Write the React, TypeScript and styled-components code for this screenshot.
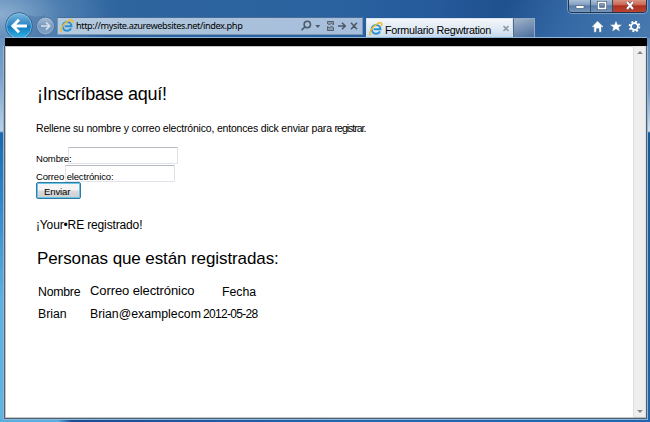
import React from 'react';
import styled, { createGlobalStyle } from 'styled-components';

const GlobalStyle = createGlobalStyle`
  * { box-sizing: border-box; }
  body { margin: 0; overflow: hidden; font-family: "Liberation Sans", Arial, sans-serif; color: #000; }
`;

const Window = styled.div`
  width: 650px;
  height: 422px;
  display: flex;
  flex-direction: column;
  overflow: hidden;
  background:
    linear-gradient(90deg, #58aedd 0, #58aedd 58px, #1b4c94 72px, #2466ae 350px, #2065b0 100%) 0 419px / 650px 3px no-repeat,
    linear-gradient(180deg, #6b94c0 0, #7ba0c8 37px, #b9d0e5 93px, #1c68ab 95px, #2c83c3 152px, #5cb2e0 262px, #62b4e0 384px) 0 38px / 6px 384px no-repeat,
    linear-gradient(180deg, #5f8dbe 0, #7199c4 50px, #d3e0ed 93px, #155b9b 95px, #1d65ad 384px) 644px 38px / 6px 384px no-repeat,
    #2866a3;
`;

const TitleArea = styled.header`
  position: relative;
  height: 38px;
  flex: none;
  display: flex;
  align-items: flex-end;
  background:
    radial-gradient(ellipse 110px 55px at 0 14px, rgba(142, 176, 209, 0.95), rgba(96, 140, 185, 0.5) 55%, transparent),
    linear-gradient(115deg, transparent 66%, rgba(22, 66, 122, 0.4) 76%, rgba(75, 125, 180, 0.35) 86%, rgba(100, 145, 190, 0.5) 100%),
    linear-gradient(90deg, #4d7fb2 0, #2e659f 120px, #2a629f 330px, #25599a 450px, #2a619f 100%);
`;

const NavButtons = styled.div`
  width: 57px;
  height: 38px;
  flex: none;
  svg { display: block; }
`;

const AddressBar = styled.div`
  width: 306px;
  height: 18px;
  margin-bottom: 3px;
  flex: none;
  display: flex;
  align-items: center;
  padding: 0 3px 0 2px;
  border: 1px solid #7996b6;
  border-top-color: #486d98;
  background: linear-gradient(90deg, #b5cbe0, #a9c1da 55%, #a7bfdc);
`;

const Url = styled.span`
  font: 9.2px/16px "Noto Sans", sans-serif;
  letter-spacing: -0.4px;
  margin-left: 2px;
  flex: 1;
  white-space: nowrap;
`;

const ActiveTab = styled.div`
  width: 147px;
  height: 20px;
  margin-left: 3px;
  display: flex;
  align-items: center;
  padding: 0 3px 0 2px;
  background: linear-gradient(180deg, #f3f6fa, #dce7f3 60%, #c0d5ea);
  border: 1px solid #d7e3ef;
  border-bottom: 0;
`;

const TabTitle = styled.span`
  flex: 1;
  margin: 3px 0 0 2px;
  font-size: 10.8px;
  line-height: 14px;
  letter-spacing: -0.28px;
  white-space: nowrap;
`;

const NewTab = styled.div`
  width: 22px;
  height: 20px;
  border: 1px solid #94a9c2;
  border-left-color: #50698a;
  background: linear-gradient(160deg, #a0b2c8, #7590b3 50%, #486e9e);
`;

const Commands = styled.div`
  display: flex;
  gap: 3px;
  margin: 0 8px 4px auto;
`;

const Caption = styled.div`
  position: absolute;
  top: -1px;
  right: 3px;
  height: 14px;
  display: flex;
  border: 1px solid #22354d;
  border-radius: 0 0 4px 4px;
  overflow: hidden;
  box-shadow: 0 0 0 1px rgba(170, 197, 224, 0.55);
`;

const CaptionButton = styled.button<{ $close?: boolean }>`
  width: ${p => (p.$close ? 33 : 22)}px;
  height: 12px;
  padding: 0;
  border: 0;
  border-right: ${p => (p.$close ? 0 : 1)}px solid #344c6b;
  display: flex;
  justify-content: center;
  background: ${p =>
    p.$close
      ? 'linear-gradient(180deg, #d89583, #cb6350 42%, #ac2f20 48%, #bb4430)'
      : 'linear-gradient(180deg, #a9bfd7, #819fc1 42%, #587ca8 48%, #7396bd)'};
`;

const BlackBar = styled.div`
  height: 9px;
  margin: -1px 3px 0 5px;
  flex: none;
  background: #000;
  border-top: 1px solid #8db9df;
  position: relative;
`;

const Frame = styled.div`
  flex: 1;
  margin: 0 3px 3px 4px;
  display: flex;
  border: 1px solid #4d6173;
  border-top: 0;
  box-shadow: 0 0 0 1px #8cb8dd;
  clip-path: inset(0 -1px -1px -1px);
  background: #fff;
`;

const Page = styled.main`
  flex: 1;
  border: solid #c6c6c6;
  border-width: 1px 0 1px 1px;
  padding: 37px 0 0 30px;
`;

const ScrollBar = styled.div`
  width: 13px;
  background: #eeeeef;
  border: 1px solid #dedede;
  border-bottom-color: #b9b9b9;
  display: flex;
  flex-direction: column;
  align-items: center;
  justify-content: space-between;
  padding: 4px 0;
`;

const Arrow = styled.i<{ $down?: boolean }>`
  border: 3px solid transparent;
  border-width: ${p => (p.$down ? '3px 3px 0' : '0 3px 3px')};
  border-${p => (p.$down ? 'top' : 'bottom')}-color: #888;
`;

const Text = styled.div<{ $size: number; $line: number; $track?: number; $top?: number; $left?: number }>`
  font-size: ${p => p.$size}px;
  line-height: ${p => p.$line}px;
  letter-spacing: ${p => p.$track || 0}px;
  margin: ${p => p.$top || 0}px 0 0 ${p => p.$left || 0}px;
  white-space: nowrap;
`;

const Registrar = styled.span`
  letter-spacing: -1px;
`;

const Form = styled.form`
  margin-top: 12px;
`;

const Field = styled.label`
  display: flex;
  height: 18px;
`;

const FieldLabel = styled.span<{ $width: number; $track: number }>`
  width: ${p => p.$width}px;
  font-size: 9.5px;
  line-height: 12px;
  letter-spacing: ${p => p.$track}px;
  padding-top: 6px;
  white-space: nowrap;
  z-index: 1;
`;

const Input = styled.input`
  width: 110px;
  height: 17px;
  padding: 0;
  border: 1px solid #e0e3ea;
  border-top-color: #b7b9c1;
  border-radius: 1px;
  background: #fff;
`;

const Submit = styled.button`
  display: block;
  width: 45px;
  height: 17px;
  margin-top: -1px;
  padding: 2px 0 0 7px;
  font: 9.5px/12px "Liberation Sans", Arial, sans-serif;
  letter-spacing: -0.1px;
  text-align: left;
  border: 1px solid #3279a4;
  border-radius: 2px;
  box-shadow: inset 0 0 0 1px #67c5e8;
  background: linear-gradient(180deg, #f4f4f4 45%, #dadada 55%, #cfcfcf);
  color: #000;
`;

const People = styled.div`
  display: grid;
  grid-template-columns: 52px 113px 80px;
  grid-template-rows: 22px 22px;
  margin: 14px 0 0 2px;
`;

const BrowserIcon = () => (
  <svg width="14" height="14" viewBox="0 0 14 14" fill="none">
    <path d="M11 9.4C10.2 11 8.9 11.7 7.1 11.7A4.4 4.4 0 1 1 11.5 7.2H4.7" stroke="#2e8fd0" strokeWidth="2" />
    <path d="M3.5 5.7C4.3 4.2 5.4 3.5 7 3.4" stroke="#74cdf1" strokeWidth="1" />
    <path d="M2.2 12.6C.2 13.2.4 10.6 2.5 7.2 5.3 2.9 10.5-.1 12.2 1.2c.8.6.5 1.8-.2 2.9" stroke="#efbd2d" strokeWidth="1.5" />
  </svg>
);

const NavIcons = () => (
  <svg width="57" height="38" viewBox="0 0 57 38">
    <defs>
      <linearGradient id="back" x1="0" y1="0" x2="0" y2="1">
        <stop offset="0" stopColor="#7bb7df" /><stop offset=".48" stopColor="#2c86c4" />
        <stop offset=".52" stopColor="#107bbd" /><stop offset="1" stopColor="#38b5e4" />
      </linearGradient>
      <linearGradient id="forward" x1="0" y1="0" x2="0" y2="1">
        <stop offset="0" stopColor="#a8bfd6" /><stop offset=".5" stopColor="#7798bc" /><stop offset="1" stopColor="#7da0c4" />
      </linearGradient>
    </defs>
    <path d="M29 15Q37 18 45 15V37H29Z" fill="#4c78a7" opacity=".6" />
    <circle cx="19" cy="26" r="13.3" fill="url(#back)" stroke="#345d87" strokeWidth="1" />
    <circle cx="19" cy="26" r="12.4" fill="none" stroke="#8fcbe9" strokeWidth=".7" />
    <path d="M27 26H14M19 19.8 12.8 26 19 32.2" fill="none" stroke="#fff" strokeWidth="2.8" />
    <circle cx="45.5" cy="26" r="8.8" fill="url(#forward)" stroke="#486f9a" strokeWidth="1" />
    <circle cx="45.5" cy="26" r="8" fill="none" stroke="#a7bed6" strokeWidth=".6" />
    <path d="M41 26H49M46 22.3 49.7 26 46 29.7" fill="none" stroke="#d3dfeb" strokeWidth="1.7" />
  </svg>
);

const AddressIcons = () => (
  <svg width="60" height="14" viewBox="0 0 60 14" fill="none" stroke="#4c5866" strokeWidth="1.5">
    <circle cx="8.3" cy="5.5" r="3.2" /><path d="M5.9 7.9 2.5 11.3" />
    <path d="M16.3 6h5l-2.5 3Z" fill="#4c5866" stroke="none" />
    <path d="M28.5 2.5h6v3.2l-2.2-1.2-1.8 1.2-2-1ZM28.5 11.5h6V8.4l-2-1-2 1.2-2-1Z" fill="#8c9bac" strokeWidth=".9" />
    <path d="M39 7h7M43 3.7 46.3 7 43 10.3M52 3.7l6 6.6M58 3.7l-6 6.6" />
  </svg>
);

const people = [{ name: 'Brian', email: 'Brian@examplecom', date: '2012-05-28' }];

export default function App() {
  return (
    <Window>
      <GlobalStyle />
      <TitleArea>
        <NavButtons><NavIcons /></NavButtons>
        <AddressBar>
          <BrowserIcon />
          <Url>http://mysite.azurewebsites.net/index.php</Url>
          <AddressIcons />
        </AddressBar>
        <ActiveTab>
          <BrowserIcon />
          <TabTitle>Formulario Regwtration</TabTitle>
          <svg width="6" height="7" viewBox="0 0 6 7"><path d="m.5 1 5 5m0-5-5 5" stroke="#8794a1" strokeWidth="1.5" /></svg>
        </ActiveTab>
        <NewTab />
        <Commands>
          <svg width="15" height="15" viewBox="0 0 15 15"><path d="m7.5 1.8 5.8 5.8-.9 1-.9-.7v5.3H8.9V9.7H6.5v3.5H3.8V7.9l-.9.7-.9-1Z" fill="#fff" stroke="#315a87" strokeWidth=".5" /></svg>
          <svg width="16" height="15" viewBox="0 0 15 15"><path d="m7.5 1.2 1.7 4.4h4.6l-3.5 2.8 1.3 4.4-4.1-2.5-4.1 2.5 1.3-4.4-3.5-2.8h4.6Z" fill="#fff" stroke="#315a87" strokeWidth=".4" /></svg>
          <svg width="15" height="15" viewBox="0 0 15 15" fill="none" stroke="#fff"><circle cx="7.5" cy="7.5" r="3.4" strokeWidth="1.7" /><circle cx="7.5" cy="7.5" r="4.8" strokeWidth="2" strokeDasharray="1.9 1.87" /></svg>
        </Commands>
        <Caption>
          <CaptionButton><svg width="12" height="12"><rect x="2" y="5.5" width="8" height="3" rx=".5" fill="#fff" stroke="#465a72" strokeWidth=".7" /></svg></CaptionButton>
          <CaptionButton><svg width="12" height="12"><rect x="2.5" y="2.5" width="7" height="6" fill="none" stroke="#465a72" strokeWidth="3" /><rect x="2.5" y="2.5" width="7" height="6" fill="none" stroke="#fff" strokeWidth="1.6" /></svg></CaptionButton>
          <CaptionButton $close><svg width="12" height="12"><path d="m3 2 6 7m0-7-6 7" stroke="#594758" strokeWidth="3.2" /><path d="m3 2 6 7m0-7-6 7" stroke="#fff" strokeWidth="2" /></svg></CaptionButton>
        </Caption>
      </TitleArea>
      <BlackBar />
      <Frame>
        <Page>
          <Text $size={18} $line={20} $track={-0.25} $left={1}>¡Inscríbase aquí!</Text>
          <Text $size={10.5} $line={14} $top={17} $track={-0.19}>Rellene su nombre y correo electrónico, entonces dick enviar para <Registrar>registrar.</Registrar></Text>
          <Form>
            <Field><FieldLabel $width={32} $track={-0.14}>Nombre:</FieldLabel><Input /></Field>
            <Field><FieldLabel $width={29} $track={-0.15}>Correo electrónico:</FieldLabel><Input /></Field>
            <Submit>Enviar</Submit>
          </Form>
          <Text $size={12} $line={14} $top={19} $track={-0.14}>¡Your•RE registrado!</Text>
          <Text $size={17} $line={20} $top={17} $track={-0.1} $left={1}>Personas que están registradas:</Text>
          <People>
            <Text $size={12.3} $line={16} $top={1} $track={-0.25}>Nombre</Text>
            <Text $size={13} $line={16} $track={-0.1}>Correo electrónico</Text>
            <Text $size={12.3} $line={16} $top={1} $left={19}>Fecha</Text>
            {people.map(p => (
              <React.Fragment key={p.email}>
                <Text $size={12.3} $line={16} $top={1}>{p.name}</Text>
                <Text $size={12.3} $line={16} $top={1}>{p.email}</Text>
                <Text $size={12} $line={16} $top={1} $track={-0.7}>{p.date}</Text>
              </React.Fragment>
            ))}
          </People>
        </Page>
        <ScrollBar><Arrow /><Arrow $down /></ScrollBar>
      </Frame>
    </Window>
  );
}
